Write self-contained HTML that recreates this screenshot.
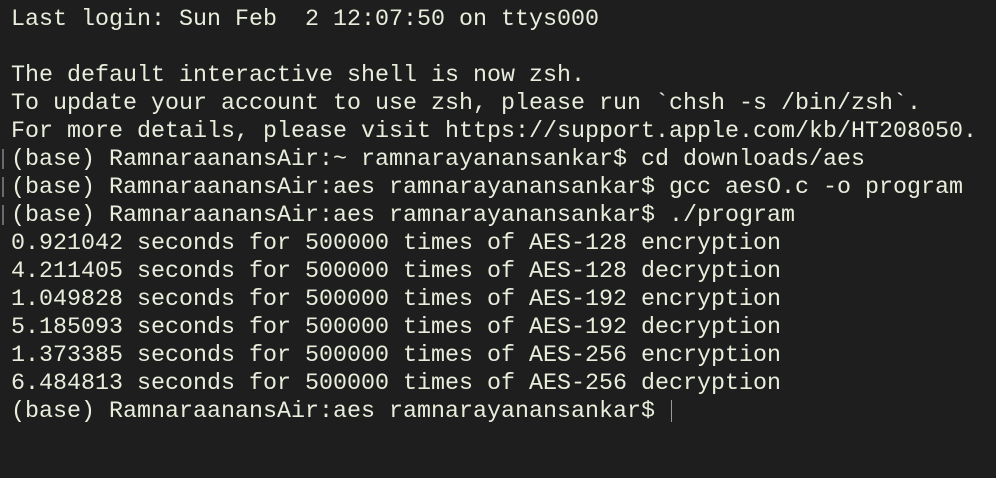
<!DOCTYPE html>
<html><head><style>
html,body{margin:0;padding:0;background:#1e1e1e;width:996px;height:478px;overflow:hidden}
pre{margin:0;position:absolute;left:11px;top:6px;font-family:"Liberation Mono",monospace;font-size:23.33px;line-height:28px;color:#e8eedc;white-space:pre}
.b{position:absolute;left:2px;width:2px;height:20px;background:#6a6a6a}
.cur{display:inline-block;width:1px;height:22px;background:#9a9a9a;vertical-align:middle;margin-left:2px}
</style></head><body>
<div class="b" style="top:149px"></div>
<div class="b" style="top:177px"></div>
<div class="b" style="top:205px"></div>
<pre>Last login: Sun Feb  2 12:07:50 on ttys000

The default interactive shell is now zsh.
To update your account to use zsh, please run `chsh -s /bin/zsh`.
For more details, please visit https://support.apple.com/kb/HT208050.
(base) RamnaraanansAir:~ ramnarayanansankar$ cd downloads/aes
(base) RamnaraanansAir:aes ramnarayanansankar$ gcc aesO.c -o program
(base) RamnaraanansAir:aes ramnarayanansankar$ ./program
0.921042 seconds for 500000 times of AES-128 encryption
4.211405 seconds for 500000 times of AES-128 decryption
1.049828 seconds for 500000 times of AES-192 encryption
5.185093 seconds for 500000 times of AES-192 decryption
1.373385 seconds for 500000 times of AES-256 encryption
6.484813 seconds for 500000 times of AES-256 decryption
(base) RamnaraanansAir:aes ramnarayanansankar$ <span class="cur"></span></pre>
</body></html>
